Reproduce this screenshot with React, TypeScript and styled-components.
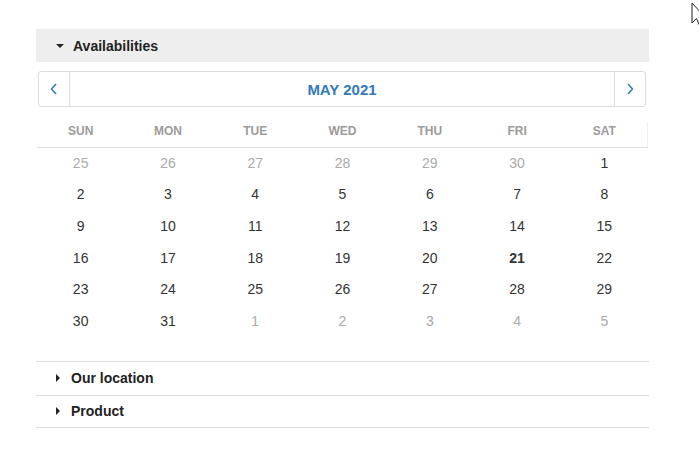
import React from "react";
import styled, { createGlobalStyle } from "styled-components";

const Global = createGlobalStyle`
  html, body { margin: 0; padding: 0; background: #fff; }
  body { font-family: "Liberation Sans", Arial, sans-serif; color: #333; }
`;

const Page = styled.div`
  position: relative;
  width: 699px;
  height: 474px;
  overflow: hidden;
  padding: 29px 0 0 36px;
  box-sizing: border-box;
`;

const Panel = styled.div`
  width: 613px;
`;

const SectionHeader = styled.div<{ $open?: boolean; $h: number }>`
  display: flex;
  align-items: center;
  height: ${(p) => p.$h}px;
  box-sizing: border-box;
  padding-left: 20px;
  gap: ${(p) => (p.$open ? 9 : 11)}px;
  background: ${(p) => (p.$open ? "#edeeed" : "transparent")};
  border-top: ${(p) => (p.$open ? "none" : "1px solid #dcdcdc")};
  font-size: 14px;
  font-weight: bold;
  color: #222;
`;

const Caret = styled.span<{ $open?: boolean }>`
  width: 0;
  height: 0;
  display: inline-block;
  ${(p) =>
    p.$open
      ? `border-left: 4px solid transparent; border-right: 4px solid transparent; border-top: 4px solid #222; margin-top: 1px;`
      : `border-top: 4px solid transparent; border-bottom: 4px solid transparent; border-left: 4px solid #222;`}
`;

const CalendarBody = styled.div`
  padding: 9px 1px 23px 1px;
`;

const Nav = styled.div`
  display: flex;
  height: 36px;
  margin: 0 2px 0 1px;
  border: 1px solid #dcdcdc;
  border-radius: 3px;
  box-sizing: border-box;
`;

const NavButton = styled.div<{ $side: "left" | "right" }>`
  width: 31px;
  box-sizing: border-box;
  display: flex;
  align-items: center;
  justify-content: center;
  ${(p) => (p.$side === "left" ? "border-right" : "border-left")}: 1px solid #dcdcdc;
`;

const MonthTitle = styled.div`
  flex: 1;
  display: flex;
  align-items: center;
  justify-content: center;
  color: #337ab7;
  font-size: 15px;
  font-weight: bold;
`;

const WeekHeader = styled.div`
  display: grid;
  grid-template-columns: repeat(7, 1fr);
  margin-top: 15px;
  border-bottom: 1px solid #dedede;
  position: relative;
  &::after {
    content: "";
    position: absolute;
    right: 0;
    top: 0;
    bottom: 0;
    border-right: 1px solid #f0f0f0;
  }
`;

const WeekDay = styled.div`
  text-align: center;
  font-size: 12px;
  font-weight: bold;
  color: #9b9b9b;
  line-height: 17px;
  padding: 1px 0 7px;
`;

const DayGrid = styled.div`
  display: grid;
  grid-template-columns: repeat(7, 1fr);
  grid-auto-rows: 31.6px;
`;

const Day = styled.div<{ $muted?: boolean; $today?: boolean }>`
  display: flex;
  align-items: center;
  justify-content: center;
  padding-bottom: 2px;
  font-size: 14px;
  color: ${(p) => (p.$muted ? "#aaaaaa" : "#333")};
  font-weight: ${(p) => (p.$today ? "bold" : "normal")};
`;

const Collapsed = styled.div`
  border-bottom: 1px solid #dcdcdc;
`;

const Cursor = styled.svg`
  position: absolute;
  left: 691px;
  top: 2px;
`;

const Chevron = ({ dir }: { dir: "left" | "right" }) => (
  <svg width="8" height="12" viewBox="0 0 8 12">
    <path
      d={dir === "left" ? "M6 1 L1.5 6 L6 11" : "M2 1 L6.5 6 L2 11"}
      fill="none"
      stroke="#337ab7"
      strokeWidth="1.5"
    />
  </svg>
);

const weekdays = ["SUN", "MON", "TUE", "WED", "THU", "FRI", "SAT"];

type Cell = { n: number; muted?: boolean; today?: boolean };

const cells: Cell[] = [
  ...[25, 26, 27, 28, 29, 30].map((n) => ({ n, muted: true })),
  ...Array.from({ length: 31 }, (_, i) => ({ n: i + 1, today: i + 1 === 21 })),
  ...[1, 2, 3, 4, 5].map((n) => ({ n, muted: true })),
];

export default function App() {
  return (
    <>
      <Global />
      <Page>
        <Panel>
          <SectionHeader $open $h={33}>
            <Caret $open />
            Availabilities
          </SectionHeader>
          <CalendarBody>
            <Nav>
              <NavButton $side="left">
                <Chevron dir="left" />
              </NavButton>
              <MonthTitle>MAY 2021</MonthTitle>
              <NavButton $side="right">
                <Chevron dir="right" />
              </NavButton>
            </Nav>
            <WeekHeader>
              {weekdays.map((d) => (
                <WeekDay key={d}>{d}</WeekDay>
              ))}
            </WeekHeader>
            <DayGrid>
              {cells.map((c, i) => (
                <Day key={i} $muted={c.muted} $today={c.today}>
                  {c.n}
                </Day>
              ))}
            </DayGrid>
          </CalendarBody>
          <Collapsed>
            <SectionHeader $h={34}>
              <Caret />
              Our location
            </SectionHeader>
            <SectionHeader $h={32}>
              <Caret />
              Product
            </SectionHeader>
          </Collapsed>
        </Panel>
        <Cursor width="16" height="26" viewBox="0 0 16 26">
          <path
            d="M1 1 L1 21 L5.5 16.5 L9 24.5 L11.5 23.3 L8 15.5 L14.5 15.5 Z"
            fill="#fff"
            stroke="#222"
            strokeWidth="1"
          />
        </Cursor>
      </Page>
    </>
  );
}
